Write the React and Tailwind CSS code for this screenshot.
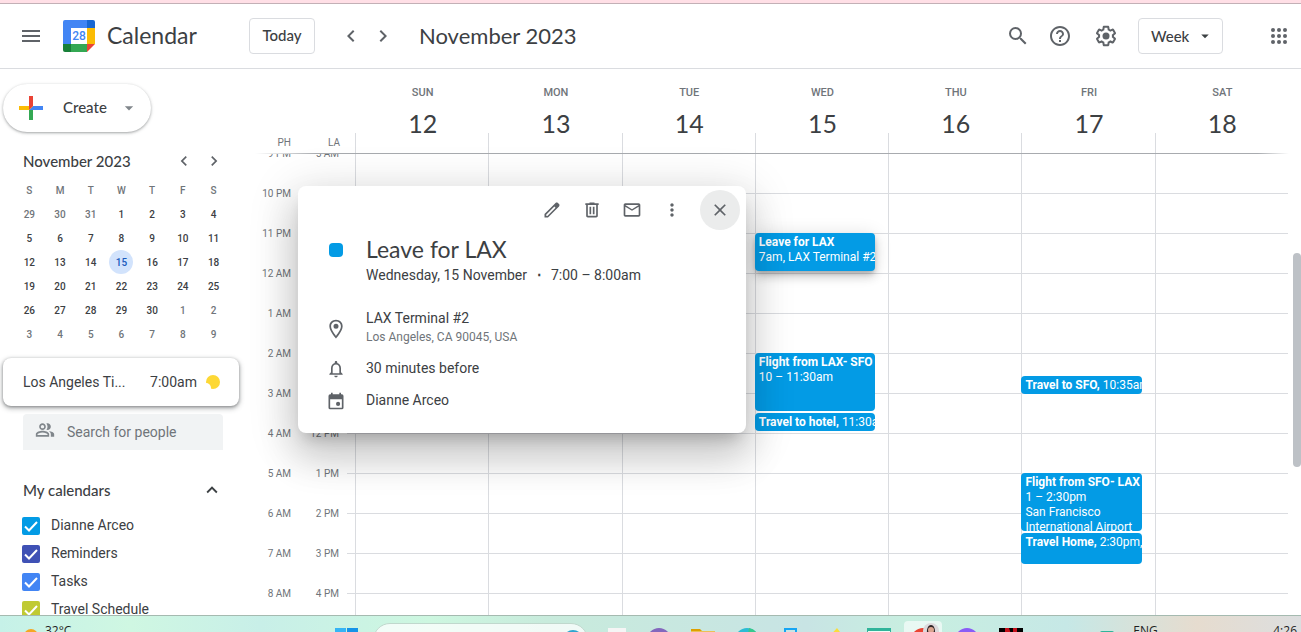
import { useState } from 'react'
import {
  MdMenu, MdSearch, MdHelpOutline, MdChevronLeft, MdChevronRight, MdArrowDropDown,
  MdMailOutline, MdMoreVert, MdClose, MdNotificationsNone, MdKeyboardArrowUp,
} from 'react-icons/md'

const DAYS = [
  { name:'SUN', date:12 }, { name:'MON', date:13 }, { name:'TUE', date:14 }, { name:'WED', date:15 },
  { name:'THU', date:16 }, { name:'FRI', date:17 }, { name:'SAT', date:18 },
]

const HOURS = [
  ['9 PM', '5 AM'], ['10 PM', '6 AM'], ['11 PM', '7 AM'], ['12 AM', '8 AM'], ['1 AM', '9 AM'], ['2 AM', '10 AM'],
  ['3 AM', '11 AM'], ['4 AM', '12 PM'], ['5 AM', '1 PM'], ['6 AM', '2 PM'], ['7 AM', '3 PM'], ['8 AM', '4 PM'],
]

// start and length are in hours, counted from the first row of the grid
const EVENTS = [
  { day:15, start:2, length:1, title:'Leave for LAX', lines:['7am, LAX Terminal #2'], raised:true },
  { day:15, start:5, length:1.5, title:'Flight from LAX- SFO', lines:['10 – 11:30am'] },
  { day:15, start:6.5, length:0.5, title:'Travel to hotel,', inline:'11:30am' },
  { day:17, start:5.58, length:0.5, title:'Travel to SFO,', inline:'10:35am' },
  { day:17, start:8, length:1.5, title:'Flight from SFO- LAX', lines:['1 – 2:30pm', 'San Francisco', 'International Airport'] },
  { day:17, start:9.5, length:0.825, title:'Travel Home,', inline:'2:30pm,' },
]
const HOUR_HEIGHT = 40

const CALENDARS = [
  { name:'Dianne Arceo', color:'bg-[#039be5]' },
  { name:'Reminders', color:'bg-[#3f51b5]' },
  { name:'Tasks', color:'bg-[#4285f4]' },
  { name:'Travel Schedule', color:'bg-[#c0ca33]' },
]

const WEEKS = [
  [29, 30, 31, 1, 2, 3, 4], [5, 6, 7, 8, 9, 10, 11], [12, 13, 14, 15, 16, 17, 18],
  [19, 20, 21, 22, 23, 24, 25], [26, 27, 28, 29, 30, 1, 2], [3, 4, 5, 6, 7, 8, 9],
]

function Logo() {
  return (
    <svg width="32" height="32" viewBox="0 0 32 32" aria-hidden="true">
      <path fill="#4285f4" d="M2 0h22v8H8v16H0V2a2 2 0 0 1 2-2z" />
      <path fill="#1967d2" d="M24 0h6a2 2 0 0 1 2 2v6h-8z" />
      <path fill="#fbbc04" d="M24 8h8v16h-8z" />
      <path fill="#34a853" d="M8 24h16v8H8z" />
      <path fill="#188038" d="M0 24h8v8H2a2 2 0 0 1-2-2z" />
      <path fill="#ea4335" d="M24 24h8l-8 8z" />
      <path fill="#fff" d="M8 8h16v16H8z" />
      <text x="16" y="20" textAnchor="middle" fill="#4285f4" className="font-['Roboto',sans-serif] text-[12px] font-medium">28</text>
    </svg>
  )
}

function SettingsIcon() {
  return (
    <svg width="24" height="24" viewBox="0 0 24 24" fill="currentColor" aria-hidden="true">
      <path d="M13.85 22.25h-3.7c-.74 0-1.36-.54-1.45-1.27l-.27-1.89c-.27-.14-.53-.29-.79-.46l-1.8.72c-.7.26-1.47-.03-1.81-.65L2.2 15.53c-.35-.66-.2-1.44.36-1.88l1.53-1.19c-.01-.15-.02-.3-.02-.46 0-.15.01-.31.02-.46l-1.52-1.19c-.59-.45-.74-1.26-.37-1.88l1.85-3.19c.34-.62 1.11-.9 1.79-.63l1.81.73c.26-.17.52-.32.78-.46l.27-1.91c.09-.7.71-1.25 1.44-1.25h3.7c.74 0 1.36.54 1.45 1.27l.27 1.89c.27.14.53.29.79.46l1.8-.72c.71-.26 1.48.03 1.82.65l1.84 3.18c.36.66.2 1.44-.36 1.88l-1.52 1.19c.01.15.02.3.02.46s-.01.31-.02.46l1.52 1.19c.56.45.72 1.23.37 1.86l-1.86 3.22c-.34.62-1.11.9-1.8.63l-1.8-.72c-.26.17-.52.32-.78.46l-.27 1.91c-.1.68-.72 1.22-1.46 1.22zm-3.23-2h2.76l.37-2.55.53-.22c.44-.18.88-.44 1.34-.78l.45-.34 2.38.96 1.38-2.4-2.03-1.58.07-.56c.03-.26.06-.51.06-.78s-.03-.53-.06-.78l-.07-.56 2.03-1.58-1.39-2.4-2.39.96-.45-.35c-.42-.32-.87-.58-1.33-.77l-.52-.22-.37-2.55h-2.76l-.37 2.55-.53.21c-.44.19-.88.44-1.34.79l-.45.33-2.38-.95-1.39 2.39 2.03 1.58-.07.56a7 7 0 0 0-.06.79c0 .26.02.53.06.78l.07.56-2.03 1.58 1.38 2.4 2.39-.96.45.35c.43.33.86.58 1.33.77l.53.22.38 2.55z" />
      <circle cx="12" cy="12" r="3.5" />
    </svg>
  )
}

function AppsIcon() {
  return (
    <svg width="24" height="24" viewBox="0 0 24 24" fill="currentColor" aria-hidden="true">
      {[6, 12, 18].map(y => [6, 12, 18].map(x => <circle key={`${x}-${y}`} cx={x} cy={y} r="2" />))}
    </svg>
  )
}

function Icon({ d, size = 20 }) {
  return (
    <svg width={size} height={size} viewBox="0 0 24 24" fill="currentColor" aria-hidden="true" className="shrink-0">
      <path d={d} />
    </svg>
  )
}

const EDIT = 'M20.41 4.94l-1.35-1.35c-.78-.78-2.05-.78-2.83 0L3 16.82V21h4.18L20.41 7.77c.79-.78.79-2.05 0-2.83zm-14 14.12L5 19v-1.36l9.82-9.82 1.41 1.41-9.82 9.83z'
const TRASH = 'M15 4V3H9v1H4v2h1v13c0 1.1.9 2 2 2h10c1.1 0 2-.9 2-2V6h1V4h-5zm2 15H7V6h10v13zM9 8h2v9H9zm4 0h2v9h-2z'
const PLACE = 'M12 1C7.6 1 4 4.300 4 8.700 4 14.500 12 23.500 12 23.500s8-9 8-14.800C20 4.300 16.400 1 12 1zm0 19.300c-2.300-3-5.900-7.900-5.900-11.500C6.100 5.500 8.800 3.100 12 3.100s5.900 2.400 5.900 5.700c0 3.600-3.600 8.500-5.900 11.500zM12 5.700a3 3 0 1 0 0 6 3 3 0 0 0 0-6z'
const EVENT = 'M19 4h-1V2h-2v2H8V2H6v2H5a2 2 0 0 0-2 2v14a2 2 0 0 0 2 2h14a2 2 0 0 0 2-2V6a2 2 0 0 0-2-2zm0 16H5V10h14v10zm-4.500-7a2.500 2.500 0 1 0 0 5 2.500 2.500 0 0 0 0-5z'
const PEOPLE = 'M15 8c0-1.420-.5-2.730-1.330-3.760.42-.14.86-.24 1.330-.24 2.210 0 4 1.790 4 4s-1.790 4-4 4c-.43 0-.84-.09-1.230-.21-.03-.01-.06-.02-.1-.03A5.980 5.980 0 0 0 15 8zm1.660 5.130C18.030 14.060 19 15.320 19 17v3h4v-3c0-2.180-3.580-3.470-6.340-3.870zM9 4c2.210 0 4 1.790 4 4s-1.790 4-4 4-4-1.790-4-4 1.790-4 4-4zm0 2c-1.100 0-2 .9-2 2s.9 2 2 2 2-.9 2-2-.9-2-2-2zm0 7c2.670 0 8 1.340 8 4v3H1v-3c0-2.660 5.330-4 8-4zm0 2c-2.900 0-6 1.400-6 2.030V18h12v-.97C15 16.400 11.900 15 9 15z'

function Header() {
  return (
    <header className="flex h-[65px] shrink-0 items-center border-b border-[#dadce0] pr-[10px] pl-[19px] text-[#5f6368]">
      <button aria-label="Main menu"><MdMenu size={24} /></button>
      <div className="ml-5 flex w-[186px] items-center gap-3">
        <Logo />
        <span className="pb-0.5 font-['Lato',sans-serif] text-[23px] text-[#3c4043]">Calendar</span>
      </div>
      <button className="h-9 w-[66px] rounded border border-[#dadce0] pb-0.5 font-['Lato',sans-serif] text-[15px] font-medium text-[#3c4043]">Today</button>
      <div className="ml-5 flex">
        <button aria-label="Previous week" className="flex size-8 items-center justify-center"><MdChevronLeft size={24} /></button>
        <button aria-label="Next week" className="flex size-8 items-center justify-center"><MdChevronRight size={24} /></button>
      </div>
      <h1 className="ml-5 pb-0.5 font-['Lato',sans-serif] text-[22px] text-[#3c4043]">November 2023</h1>
      <div className="ml-auto flex items-center">
        <button aria-label="Search" className="flex w-9 justify-center"><MdSearch size={24} /></button>
        <button aria-label="Support" className="flex w-12 justify-center"><MdHelpOutline size={24} /></button>
        <button aria-label="Settings" className="flex w-11 justify-center"><SettingsIcon /></button>
        <button className="ml-[10px] flex h-9 w-[85px] items-center justify-between rounded border border-[#dadce0] pr-2 pl-3 font-['Lato',sans-serif] text-[15px] font-medium text-[#3c4043]">
          Week <MdArrowDropDown size={18} />
        </button>
        <button aria-label="Google apps" className="ml-11"><AppsIcon /></button>
      </div>
    </header>
  )
}

function MiniMonth() {
  return (
    <section className="mt-[17px]">
      <div className="flex h-6 items-center pr-[26px] pl-[23px] text-[#5f6368]">
        <h2 className="flex-1 font-['Lato',sans-serif] text-[15px] font-medium text-[#3c4043]">November 2023</h2>
        <button aria-label="Previous month" className="flex w-[30px] justify-center"><MdChevronLeft size={20} /></button>
        <button aria-label="Next month" className="flex w-[30px] justify-center"><MdChevronRight size={20} /></button>
      </div>
      <table className="mt-[5px] ml-[14px] w-[215px] table-fixed text-center text-[10px] font-medium">
        <thead>
          <tr className="h-6 text-[#70757a]">
            {['S', 'M', 'T', 'W', 'T', 'F', 'S'].map((d, i) => <th key={i} className="p-0 font-medium">{d}</th>)}
          </tr>
        </thead>
        <tbody>
          {WEEKS.map((week, w) => (
            <tr key={w} className="h-6">
              {week.map(d => {
                const outside = (w === 0 && d > 7) || (w > 3 && d < 10)
                const selected = w === 2 && d === 15
                return (
                  <td key={d} className="p-0">
                    <button className={`size-6 rounded-full ${selected ? 'bg-[#d2e3fc] text-[#185abc]' : outside ? 'text-[#70757a]' : 'text-[#3c4043]'}`}>{d}</button>
                  </td>
                )
              })}
            </tr>
          ))}
        </tbody>
      </table>
    </section>
  )
}

function CalendarToggle({ name, color }) {
  const [checked, setChecked] = useState(true)
  return (
    <label className="flex h-7 items-center gap-[11px] text-sm text-[#3c4043]">
      <span className="grid size-[18px]">
        <input type="checkbox" checked={checked} onChange={e => setChecked(e.target.checked)}
          className={`size-[18px] appearance-none rounded-xs [grid-area:1/1] ${color}`} />
        {checked && (
          <svg viewBox="0 0 18 18" className="pointer-events-none size-[18px] [grid-area:1/1]" fill="none" stroke="#fff" strokeWidth="2">
            <path d="M3 9.500l4 4 8-8.500" />
          </svg>
        )}
      </span>
      <span className="pb-0.5">{name}</span>
    </label>
  )
}

function Sidebar() {
  return (
    <aside className="flex w-[255px] shrink-0 flex-col overflow-hidden pt-[15px]">
      <button className="ml-[3px] flex h-12 w-[148px] shrink-0 items-center rounded-full pr-3 pl-4 font-['Lato',sans-serif] text-[15px] font-medium text-[#3c4043] shadow-[0_1px_2px_0_rgba(60,64,67,0.3),0_1px_3px_1px_rgba(60,64,67,0.15)]">
        <svg width="24" height="24" viewBox="0 0 24 24" aria-hidden="true">
          <path fill="#34a853" d="M10 14h4v10h-4z" />
          <path fill="#4285f4" d="M14 10h10v4H10z" />
          <path fill="#fbbc04" d="M0 10h14l-4 4H0z" />
          <path fill="#ea4335" d="M10 14V0h4v10z" />
        </svg>
        <span className="ml-5 flex-1 pb-0.5 text-left">Create</span>
        <MdArrowDropDown size={20} className="text-[#80868b]" />
      </button>

      <MiniMonth />

      <div className="mt-3 mr-4 ml-[3px] flex h-12 shrink-0 items-center rounded-lg pr-[19px] pl-5 text-sm text-[#3c4043] shadow-[0_1px_3px_0_rgba(60,64,67,0.45),0_2px_5px_1px_rgba(60,64,67,0.3)]">
        <span className="flex-1">Los Angeles Ti...</span>
        <span>7:00am</span>
        <svg width="14" height="14" viewBox="0 0 14 14" className="ml-[9px]" aria-hidden="true">
          <circle cx="7" cy="7" r="7" fill="#fdd835" />
          <circle cx="0" cy="13" r="5" fill="#fff" />
        </svg>
      </div>

      <label className="mt-2 mr-8 ml-[23px] flex h-9 shrink-0 items-center gap-3 rounded-t bg-[#f1f3f4] pl-3 text-[#80868b]">
        <span className="pb-1"><Icon d={PEOPLE} /></span>
        <input placeholder="Search for people" aria-label="Search for people"
          className="w-0 flex-1 text-sm outline-none placeholder:text-[#70757a]" />
      </label>

      <div className="mt-[26px] mr-8 ml-[23px] flex h-7 shrink-0 items-center justify-between">
        <h2 className="font-['Lato',sans-serif] text-[15px] font-medium text-[#3c4043]">My calendars</h2>
        <button aria-label="Collapse my calendars" className="text-[#3c4043]"><MdKeyboardArrowUp size={22} /></button>
      </div>
      <div className="mt-2 ml-[22px] flex flex-col">
        {CALENDARS.map(c => <CalendarToggle key={c.name} {...c} />)}
      </div>
    </aside>
  )
}

function EventBlock({ event }) {
  return (
    <button
      style={{ top: Math.round(event.start * HOUR_HEIGHT) - 1, height: Math.round(event.length * HOUR_HEIGHT) - 2 }}
      className={`absolute right-[13px] -left-px flex flex-col overflow-hidden rounded bg-[#039be5] pt-0.5 pl-1 text-left text-xs leading-[15px] whitespace-nowrap text-white
        ${event.raised ? 'shadow-[0_6px_10px_0_rgba(0,0,0,0.14),0_1px_18px_0_rgba(0,0,0,0.12),0_3px_5px_-1px_rgba(0,0,0,0.2)]' : ''}`}>
      <span><b className="font-bold">{event.title}</b> {event.inline}</span>
      {event.lines?.map(l => <span key={l}>{l}</span>)}
    </button>
  )
}

function WeekView() {
  return (
    <main className="flex min-w-0 flex-1 flex-col">
      <div className="flex h-[84px] shrink-0 pr-[13px]">
        <div className="flex w-[100px] items-end pb-0.5 text-right text-[10px] leading-4 text-[#70757a]">
          <span className="w-9">PH</span>
          <span className="w-[49px]">LA</span>
        </div>
        <div className="grid flex-1 grid-cols-7 text-center">
          {DAYS.map(d => (
            <div key={d.name} className="flex flex-col justify-end">
              <span className="pl-0.5 text-[11px] leading-4 font-medium text-[#70757a]">{d.name}</span>
              <span className="mt-3 pl-0.5 font-['Lato',sans-serif] text-[25px] leading-5 text-[#3c4043]">{d.date}</span>
              <div className="h-5 border-l border-[#dadce0]" />
            </div>
          ))}
        </div>
      </div>
      <div className="mr-3 h-px shrink-0 bg-[linear-gradient(to_right,transparent,#a8abaf_6%,#a8abaf_97%,transparent)]" />
      <div className="flex min-h-0 flex-1 overflow-hidden">
        <div className="-mt-[21px] w-[92px] text-right text-[10px] text-[#70757a]">
          {HOURS.map(([ph, la]) => (
            <div key={ph} className="flex h-10 items-center">
              <span className="w-9">{ph}</span>
              <span className="w-12">{la}</span>
            </div>
          ))}
        </div>
        <div className="w-2">
          {HOURS.map(([ph]) => <div key={ph} className="h-10 border-b border-[#dadce0]" />)}
        </div>
        <div className="grid flex-1 grid-cols-7">
          {DAYS.map(d => (
            <div key={d.name} className="relative border-l border-[#dadce0]">
              {HOURS.map(([ph]) => <div key={ph} className="h-10 border-b border-[#dadce0]" />)}
              {EVENTS.filter(e => e.day === d.date).map(e => <EventBlock key={e.title} event={e} />)}
            </div>
          ))}
        </div>
        <div className="w-[13px] pt-[99px] pl-[5px]">
          <div className="h-[214px] rounded-full bg-[#bdc1c6]" />
        </div>
      </div>
    </main>
  )
}

function DetailRow({ icon, children }) {
  return (
    <div className="flex items-center gap-5">
      <span className="flex w-5 shrink-0 justify-center pt-0.5 text-[#5f6368]">{icon}</span>
      <div className="text-sm text-[#3c4043]">{children}</div>
    </div>
  )
}

function EventPopup() {
  return (
    <div role="dialog" aria-label="Leave for LAX"
      className="absolute top-[117px] left-[298px] w-[448px] rounded-lg bg-white pt-1 pb-[22px] shadow-[0_24px_38px_3px_rgba(0,0,0,0.14),0_9px_46px_8px_rgba(0,0,0,0.12),0_11px_15px_-7px_rgba(0,0,0,0.2)]">
      <div className="flex justify-end pr-1.5 text-[#5f6368]">
        <button aria-label="Edit event" className="flex size-10 items-center justify-center"><Icon d={EDIT} /></button>
        <button aria-label="Delete event" className="flex size-10 items-center justify-center"><Icon d={TRASH} /></button>
        <button aria-label="Email guests" className="flex size-10 items-center justify-center"><MdMailOutline size={20} /></button>
        <button aria-label="Options" className="flex size-10 items-center justify-center"><MdMoreVert size={20} /></button>
        <button aria-label="Close" className="ml-2 flex size-10 items-center justify-center rounded-full bg-[#ebecec]"><MdClose size={20} /></button>
      </div>
      <div className="px-7">
        <div className="mt-[5px] flex items-center gap-5">
          <span className="flex w-5 justify-center pt-0.5"><span className="size-[14px] rounded bg-[#039be5]" /></span>
          <h2 className="font-['Lato',sans-serif] text-[23px] leading-7 text-[#3c4043]">Leave for LAX</h2>
        </div>
        <p className="mt-0.5 ml-10 flex gap-2.5 text-sm leading-5 text-[#3c4043]">
          <span>Wednesday, 15 November</span><b>⋅</b><span>7:00 – 8:00am</span>
        </p>
        <div className="mt-[23px] flex flex-col gap-2.5">
          <DetailRow icon={<Icon d={PLACE} />}>
            <p>LAX Terminal #2</p>
            <p className="text-xs leading-[19px] text-[#70757a]">Los Angeles, CA 90045, USA</p>
          </DetailRow>
          <DetailRow icon={<MdNotificationsNone size={20} />}>30 minutes before</DetailRow>
          <DetailRow icon={<Icon d={EVENT} />}>Dianne Arceo</DetailRow>
        </div>
      </div>
    </div>
  )
}

function TaskIcon({ label, children, active }) {
  return (
    <button aria-label={label} className="flex h-12 w-11 shrink-0 items-center justify-center">
      <span className={`flex size-[38px] items-center justify-center rounded ${active ? 'bg-white/60' : ''}`}>
        <svg width="24" height="24" viewBox="0 0 24 24" className="overflow-visible">{children}</svg>
      </span>
    </button>
  )
}

function Taskbar() {
  return (
    <footer className="h-[17px] shrink-0 overflow-hidden border-t border-[#a5bab0] bg-[linear-gradient(to_right,#c6f1e8,#cff7e2_10%,#c8efe8_20%,#cdf7e0_33%,#c8ebdc_42%,#c8e4e4_62%,#c8efe0_70%,#c6e8e6_82%,#e6dccf_92%,#dcdedf)]">
      <div className="flex h-12 items-center text-xs text-[#1f1f1f]">
        <div className="flex w-[325px] shrink-0 items-start self-start pt-[7px] pl-6">
          <span className="mt-1.5 size-[14px] rounded-full bg-[#f5a623]" />
          <span className="ml-[7px] font-['Open_Sans',sans-serif] leading-4">32°C</span>
        </div>
        <TaskIcon label="Start">
          <path fill="#36b4f5" d="M0 0h11v11H0zM0 12h11v11H0z" />
          <path fill="#1593e8" d="M12 0h11v11H12zM12 12h11v11H12z" />
        </TaskIcon>
        <div className="mr-[5px] ml-1 flex h-[34px] w-[215px] shrink-0 items-center justify-between rounded-full border border-[#c0d8cd] bg-white/75 pr-1 pl-3">
          <MdSearch size={16} className="text-[#5f6368]" />
          <span className="size-5 rounded-full border-2 border-[#2da5cf]" />
        </div>
        <TaskIcon label="Task view"><path fill="#f5f5f5" d="M5 0h18v16H5z" /></TaskIcon>
        <TaskIcon label="Chat"><circle cx="12" cy="12" r="12" fill="#8367bd" /></TaskIcon>
        <TaskIcon label="File Explorer">
          <path fill="#dea000" d="M0 1h9l2 2v6H0z" />
          <path fill="#ecc056" d="M0 3h24v18H0z" />
        </TaskIcon>
        <TaskIcon label="Edge">
          <circle cx="12" cy="12" r="12" fill="#2cbcd4" />
          <path fill="#36c98c" d="M14 0a12 12 0 0 1 10 12H12z" />
        </TaskIcon>
        <TaskIcon label="Phone Link"><path fill="none" stroke="#16a5f3" strokeWidth="2" d="M6 1h11v21H6z" /></TaskIcon>
        <TaskIcon label="Sticky notes"><path fill="#fadc3c" d="M14 0l3 4 5 1-5 5-12 8-2-6z" /></TaskIcon>
        <TaskIcon label="Sheets">
          <path fill="#30b49a" d="M0 0h24v22H0z" />
          <path fill="#f0fbf6" d="M1 3h22v18H1z" />
        </TaskIcon>
        <TaskIcon label="Chrome" active>
          <circle cx="12" cy="12" r="12" fill="#ea4332" />
          <circle cx="20" cy="3" r="8" fill="#ddd9dc" />
          <path fill="#2e2427" d="M16 10c0-6-1-12 4-13 5 1 4 7 4 13z" />
          <circle cx="20" cy="2" r="3" fill="#dba48f" />
        </TaskIcon>
        <TaskIcon label="Messenger">
          <circle cx="12" cy="12" r="12" fill="#8a5cf6" />
        </TaskIcon>
        <TaskIcon label="Netflix">
          <path fill="#000" d="M0 0h24v24H0z" />
          <path fill="#c4111b" d="M6 0h4l8 24h-4zM6 0h4v24H6zM14 0h4v24h-4z" />
        </TaskIcon>
        <div className="ml-auto flex items-start self-start pt-[7px] pr-1 font-['Open_Sans',sans-serif] leading-4">
          <span className="mt-2 mr-[19px] h-4 w-[14px] rounded-xs bg-[#30b49a]" />
          <span className="w-[140px]">ENG</span>
          <span>4:26</span>
        </div>
      </div>
    </footer>
  )
}

export default function App() {
  return (
    <div className="flex h-screen flex-col overflow-hidden bg-white font-['Roboto',sans-serif]">
      <div className="h-1 shrink-0 border-b border-[#c3b0b6] bg-[#ffdfe6]" />
      <Header />
      <div className="relative flex min-h-0 flex-1">
        <Sidebar />
        <WeekView />
        <EventPopup />
      </div>
      <Taskbar />
    </div>
  )
}
